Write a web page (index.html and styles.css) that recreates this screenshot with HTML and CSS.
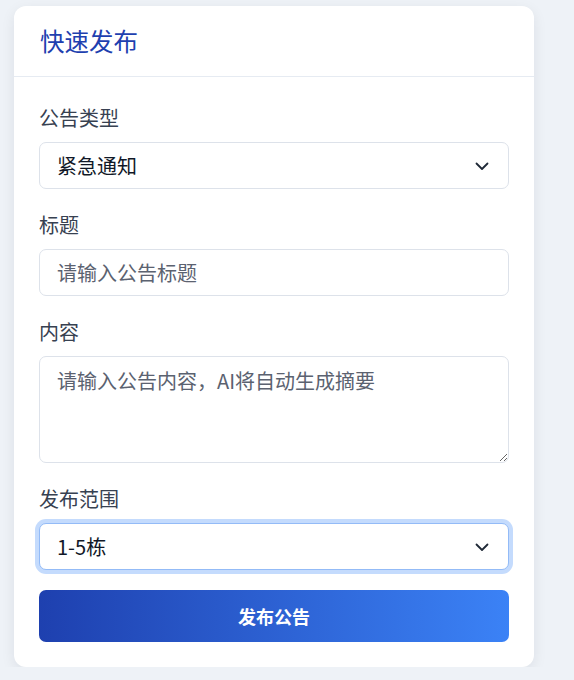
FILE: index.html
```html
<!DOCTYPE html>
<html lang="zh-CN">
<head>
<meta charset="utf-8">
<title>快速发布</title>
<link rel="stylesheet" href="styles.css">
</head>
<body>
<div class="card">
  <div class="card-header">
    <h2 class="card-title">快速发布</h2>
  </div>
  <form class="card-body">
    <div class="field">
      <label class="label">公告类型</label>
      <div class="select">
        <span class="select-value">紧急通知</span>
        <svg class="chevron" viewBox="0 0 16 16" width="16" height="16"><path d="M2.5 5.5 L8 11 L13.5 5.5" fill="none" stroke="#1f2937" stroke-width="1.8" stroke-linecap="round" stroke-linejoin="round"/></svg>
      </div>
    </div>
    <div class="field">
      <label class="label">标题</label>
      <input class="input" type="text" placeholder="请输入公告标题">
    </div>
    <div class="field">
      <label class="label">内容</label>
      <textarea class="input textarea" placeholder="请输入公告内容，AI将自动生成摘要"></textarea>
    </div>
    <div class="field">
      <label class="label">发布范围</label>
      <div class="select focused">
        <span class="select-value">1-5栋</span>
        <svg class="chevron" viewBox="0 0 16 16" width="16" height="16"><path d="M2.5 5.5 L8 11 L13.5 5.5" fill="none" stroke="#1f2937" stroke-width="1.8" stroke-linecap="round" stroke-linejoin="round"/></svg>
      </div>
    </div>
    <button class="btn" type="button">发布公告</button>
  </form>
</div>
</body>
</html>
```
FILE: styles.css
```css
* { box-sizing: border-box; }
html, body { margin: 0; padding: 0; }
body {
  background: #eef2f7;
  font-family: "Noto Sans CJK SC", "Noto Sans", "Liberation Sans", sans-serif;
  padding: 6px 40px 0 14px;
}
.card {
  width: 520px;
  background: #ffffff;
  border-radius: 12px;
  box-shadow: 0 4px 14px rgba(15, 23, 42, 0.08);
}
.card-header {
  height: 71px;
  padding: 0 26px;
  display: flex;
  align-items: center;
  border-bottom: 1px solid #e6ebf2;
}
.card-title {
  margin: 0;
  font-size: 24.5px;
  font-weight: 400;
  color: #1e40af;
  line-height: 1;
}
.card-body {
  padding: 27px 25px 25px 25px;
  display: flex;
  flex-direction: column;
}
.field {
  display: flex;
  flex-direction: column;
  margin-bottom: 22px;
}
.field:nth-child(4) { margin-bottom: 20px; }
.label {
  font-size: 20px;
  line-height: 28px;
  color: #374151;
  margin-bottom: 10px;
}
.select {
  position: relative;
  height: 47px;
  border: 1px solid #dde2ea;
  border-radius: 7px;
  display: flex;
  align-items: center;
  padding: 0 17px;
  background: #fff;
}
.select.focused {
  border-color: #93bbf7;
  box-shadow: 0 0 0 4px #c4dbfd;
}
.select-value {
  font-size: 20px;
  color: #111827;
}
.chevron {
  position: absolute;
  right: 18px;
  top: 15px;
}
.input {
  height: 47px;
  border: 1px solid #dde2ea;
  border-radius: 7px;
  padding: 0 17px;
  font-family: inherit;
  font-size: 20px;
  color: #111827;
  background: #fff;
  outline: none;
}
.input::placeholder { color: #5b6270; }
.textarea {
  height: 107px;
  padding: 9px 17px;
  line-height: 1.5;
  resize: vertical;
}
.btn {
  height: 52px;
  border: none;
  border-radius: 7px;
  background: linear-gradient(90deg, #1e40af 0%, #3b82f6 100%);
  color: #ffffff;
  font-family: inherit;
  font-size: 18px;
  font-weight: 700;
  cursor: pointer;
}
```
